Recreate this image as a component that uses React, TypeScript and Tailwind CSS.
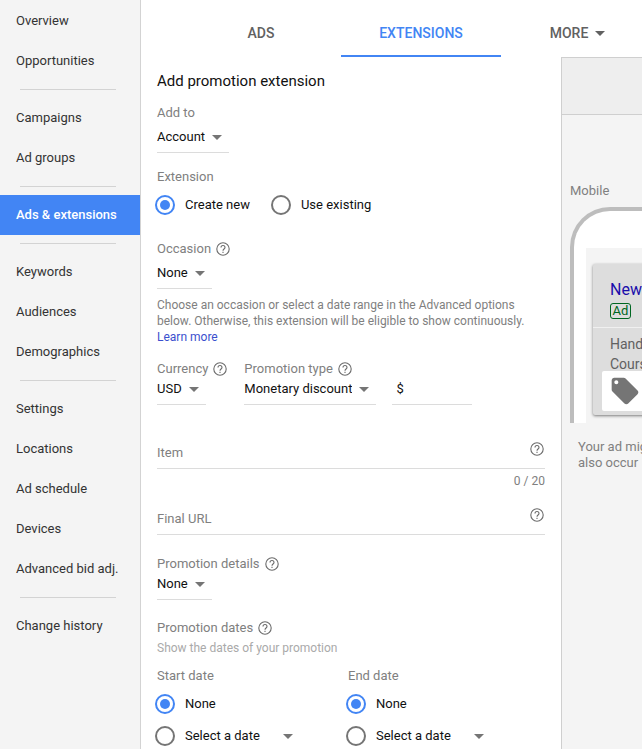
import { useState } from 'react';
import type { ReactNode } from 'react';
import clsx from 'clsx';

const NAV_GROUPS = [
  ['Overview', 'Opportunities'],
  ['Campaigns', 'Ad groups'],
  ['Ads & extensions'],
  ['Keywords', 'Audiences', 'Demographics'],
  ['Settings', 'Locations', 'Ad schedule', 'Devices', 'Advanced bid adj.'],
  ['Change history'],
];

const ACTIVE_NAV = 'Ads & extensions';

const Caret = ({ className }: { className?: string }) => (
  <svg viewBox="0 0 24 24" className={clsx('size-6 fill-current', className)} aria-hidden="true">
    <path d="M7 10l5 5 5-5z" />
  </svg>
);

const HelpIcon = () => (
  <svg viewBox="0 0 16 16" className="size-4 shrink-0 fill-none stroke-[#6b6b6b]" strokeWidth="1.1" aria-hidden="true">
    <circle cx="8" cy="8" r="6.2" />
    <path d="M6 6.5a2 2 0 1 1 4 0c0 1.4-2 1.6-2 3.2" />
    <path d="M8 10.7v1.2" />
  </svg>
);

const HelpButton = ({ topic }: { topic: string }) => (
  <button type="button" aria-label={`Help: ${topic}`} className="cursor-pointer">
    <HelpIcon />
  </button>
);

type SelectProps = {
  id: string;
  options: string[];
  label?: string;
  dense?: boolean;
  className?: string;
};

const Select = ({ id, options, label, dense, className }: SelectProps) => (
  <div className="relative w-fit">
    <select
      id={id}
      aria-label={label}
      className={clsx(
        'block field-sizing-content appearance-none pr-6 outline-none cursor-pointer',
        dense ? 'h-7 pb-1' : 'h-8',
        className,
      )}
    >
      {options.map((option) => (
        <option key={option}>{option}</option>
      ))}
    </select>
    <Caret className={clsx('absolute right-0 text-[#757575] pointer-events-none', dense ? 'top-0' : 'top-1')} />
  </div>
);

const FieldLabel = ({ htmlFor, help, children }: { htmlFor: string; help?: boolean; children: string }) => (
  <div className="flex items-center gap-1 h-4 text-[#808080]">
    <label htmlFor={htmlFor}>{children}</label>
    {help && <HelpButton topic={children} />}
  </div>
);

type RadioProps = {
  name: string;
  checked: boolean;
  onChange: () => void;
  label?: string;
  children?: ReactNode;
};

const RadioInput = ({ name, checked, onChange, label }: RadioProps) => (
  <input
    type="radio"
    name={name}
    aria-label={label}
    checked={checked}
    onChange={onChange}
    className="size-5 shrink-0 appearance-none rounded-full border-2 border-[#757575] p-[3px] bg-clip-content checked:border-[#4285f4] checked:bg-[#4285f4]"
  />
);

const Radio = ({ children, ...props }: RadioProps) => (
  <label className="flex items-center gap-2.5 h-5 cursor-pointer">
    <RadioInput {...props} />
    {children}
  </label>
);

const TextField = ({ id, label }: { id: string; label: string }) => (
  <div className="flex items-center h-8 border-b border-[#dcdcdc]">
    <input
      id={id}
      type="text"
      aria-label={label}
      placeholder={label}
      className="min-w-0 flex-1 outline-none placeholder:text-[#808080]"
    />
    <div className="flex self-start pt-1">
      <HelpButton topic={label} />
    </div>
  </div>
);

const DateChoice = ({ title, name }: { title: string; name: string }) => {
  const [custom, setCustom] = useState(false);

  return (
    <fieldset>
      <legend className="h-4 leading-4 text-[#808080]">{title}</legend>
      <div className="flex flex-col gap-3 mt-2.5 -ml-0.5">
        <Radio name={name} checked={!custom} onChange={() => setCustom(false)}>
          None
        </Radio>
        <div className="flex items-center gap-2.5 h-5">
          <RadioInput name={name} label="Select a date" checked={custom} onChange={() => setCustom(true)} />
          <Select id={`${name}-date`} label={title} options={['Select a date']} className="w-[115px]" />
        </div>
      </div>
    </fieldset>
  );
};

const Sidebar = () => (
  <nav className="w-[141px] shrink-0 pt-px bg-[#f4f4f4] border-r border-[#d3d3d3]">
    {NAV_GROUPS.map((group, index) => (
      <div key={group[0]}>
        {index > 0 && <hr className="my-2 ml-5 mr-6 border-[#d3d3d3]" />}
        {group.map((item) => (
          <a
            key={item}
            href="#"
            className={clsx(
              'flex items-center h-10 pl-4 whitespace-nowrap',
              item === ACTIVE_NAV ? 'bg-[#4285f4] text-white font-medium' : 'text-[#333]',
            )}
          >
            {item}
          </a>
        ))}
      </div>
    ))}
  </nav>
);

const Tabs = () => (
  <div className="flex h-[57px] pl-10 pt-2.5 text-sm font-medium text-[#616161] overflow-hidden">
    <button type="button" className="w-40 shrink-0 cursor-pointer border-b-2 border-transparent">
      ADS
    </button>
    <button type="button" className="w-40 shrink-0 cursor-pointer border-b-2 border-[#4285f4] text-[#4285f4]">
      EXTENSIONS
    </button>
    <button type="button" className="flex items-center justify-center w-40 shrink-0 cursor-pointer border-b-2 border-transparent">
      MORE
      <Caret />
    </button>
  </div>
);

const PromotionForm = () => {
  const [mode, setMode] = useState('new');

  return (
    <form className="w-[420px] shrink-0 px-4 pt-3 pb-1">
      <h1 className="text-[15px] leading-6">Add promotion extension</h1>

      <div className="mt-3">
        <FieldLabel htmlFor="add-to">Add to</FieldLabel>
        <Select id="add-to" options={['Account', 'Campaign', 'Ad group']} className="border-b border-[#dcdcdc]" />
      </div>

      <fieldset className="mt-4">
        <legend className="h-4 leading-4 text-[#808080]">Extension</legend>
        <div className="flex gap-[21px] mt-2.5 -ml-0.5">
          <Radio name="mode" checked={mode === 'new'} onChange={() => setMode('new')}>
            Create new
          </Radio>
          <Radio name="mode" checked={mode === 'existing'} onChange={() => setMode('existing')}>
            Use existing
          </Radio>
        </div>
      </fieldset>

      <div className="mt-[26px]">
        <FieldLabel htmlFor="occasion" help>
          Occasion
        </FieldLabel>
        <Select id="occasion" options={['None']} className="border-b border-[#dcdcdc]" />
      </div>
      <p className="mt-2 text-xs leading-4 text-[#808080]">
        Choose an occasion or select a date range in the Advanced options below. Otherwise, this extension will be
        eligible to show continuously.{' '}
        <a href="#" className="block w-fit text-[#3b50ce]">
          Learn more
        </a>
      </p>

      <div className="flex items-end gap-4 mt-4">
        <div>
          <FieldLabel htmlFor="currency" help>
            Currency
          </FieldLabel>
          <Select id="currency" options={['USD']} dense className="border-b border-[#dcdcdc]" />
        </div>
        <div>
          <FieldLabel htmlFor="type" help>
            Promotion type
          </FieldLabel>
          <Select
            id="type"
            options={['Monetary discount', 'Percent discount']}
            dense
            className="border-b border-[#dcdcdc]"
          />
        </div>
        <label className="flex w-20 h-7 pl-1 pb-1 items-center border-b border-[#dcdcdc]">
          $
          <input type="text" aria-label="Amount" className="w-full min-w-0 pl-1 outline-none" />
        </label>
      </div>

      <div className="mt-8">
        <TextField id="item" label="Item" />
        <p className="mt-1 h-4 leading-4 text-right text-xs text-[#808080]">0 / 20</p>
      </div>
      <div className="mt-3.5">
        <TextField id="final-url" label="Final URL" />
      </div>

      <div className="mt-[21px]">
        <FieldLabel htmlFor="details" help>
          Promotion details
        </FieldLabel>
        <Select id="details" options={['None']} dense className="border-b border-[#dcdcdc]" />
      </div>

      <div className="flex items-center gap-1 h-4 mt-5 text-[#808080]">
        <h2>Promotion dates</h2>
        <HelpButton topic="Promotion dates" />
      </div>
      <p className="mt-1 leading-4 text-xs text-[#aaa]">Show the dates of your promotion</p>
      <div className="grid grid-cols-[191px_1fr] mt-3">
        <DateChoice title="Start date" name="start" />
        <DateChoice title="End date" name="end" />
      </div>
    </form>
  );
};

const Preview = () => (
  <aside className="flex-1 min-w-0 overflow-hidden bg-[#f4f4f4] border-l border-t border-[#cfcfcf]">
    <div className="h-[57px] bg-[#eee] border-b border-[#cfcfcf]" />
    <div className="pl-2 pt-17 text-[#808080]">
      <h2 className="leading-4">Mobile</h2>
      <div className="w-[320px] h-54 mt-2 pt-[37px] px-3 bg-white border-4 border-b-0 border-[#bdbdbd] rounded-t-[40px]">
        <div className="h-full pt-4 px-[7px] bg-[#f4f4f4]">
          <div className="pb-1 bg-[#ddd] rounded-xs shadow-[0_1px_3px_rgba(0,0,0,0.5)]">
            <div className="h-16 px-[17px] pt-4 border-b border-[#f0f0f0]">
              <p className="text-base leading-5 text-[#1a0dab]">New</p>
              <span className="flex items-center justify-center w-[21px] h-4 mt-[3px] border border-[#006621] rounded-[3px] text-[#006621]">
                Ad
              </span>
            </div>
            <p className="px-[17px] pt-1.5 text-sm leading-5 text-[#616161]">
              Handmade
              <br />
              Courses
            </p>
            <div className="-mt-[3px] ml-[9px] mr-2 h-10 pl-[7px] pt-1 bg-white rounded-xs">
              <svg viewBox="0 0 24 24" className="size-8 fill-[#757575]" aria-hidden="true">
                <path d="M21.41 11.58l-9-9C12.05 2.22 11.55 2 11 2H4c-1.1 0-2 .9-2 2v7c0 .55.22 1.05.59 1.42l9 9c.36.36.86.58 1.41.58.55 0 1.05-.22 1.41-.59l7-7c.37-.36.59-.86.59-1.41 0-.55-.23-1.06-.59-1.42zM5.5 7C4.67 7 4 6.33 4 5.5S4.67 4 5.5 4 7 4.67 7 5.5 6.33 7 5.5 7z" />
              </svg>
            </div>
          </div>
        </div>
      </div>
      <p className="mt-4 pl-2 leading-4 whitespace-nowrap">
        Your ad might
        <br />
        also occur
      </p>
    </div>
  </aside>
);

const App = () => {
  return (
    <div className="flex min-h-screen bg-white font-[Roboto,sans-serif] text-[13px] text-[#111]">
      <Sidebar />
      <main className="flex flex-col flex-1 min-w-0">
        <Tabs />
        <div className="flex flex-1">
          <PromotionForm />
          <Preview />
        </div>
      </main>
    </div>
  );
};

export default App;
